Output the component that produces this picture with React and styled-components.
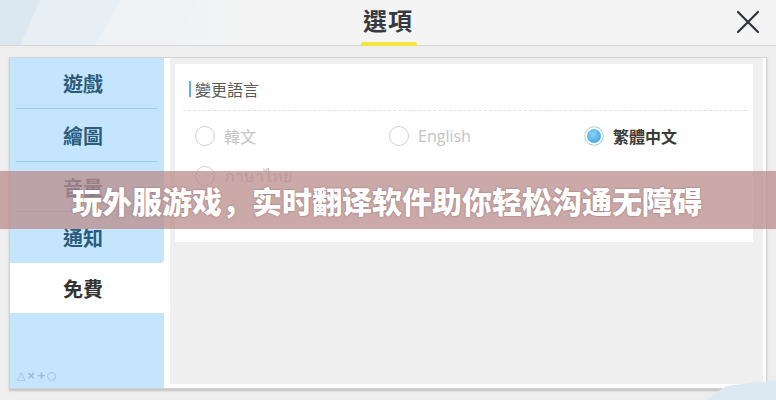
import React from 'react';
import styled, { createGlobalStyle } from 'styled-components';

const GlobalStyle = createGlobalStyle`
  html, body {
    margin: 0;
    padding: 0;
    background: #efefef;
  }
  body {
    font-family: "Noto Sans CJK TC", "Noto Sans", sans-serif;
  }
`;

const Page = styled.div`
  position: relative;
  width: 776px;
  height: 400px;
  overflow: hidden;
  background: #eeeeee;
`;

const Header = styled.header`
  position: relative;
  height: 45px;
  display: flex;
  justify-content: center;
  align-items: flex-start;
  background: linear-gradient(90deg, #e9eef2 0%, #f4f4f4 35%, #f4f4f4 100%);
  border-bottom: 1px solid #d6d6d6;
`;

const Decor = styled.svg`
  position: absolute;
  left: 0;
  top: 0;
`;

const Title = styled.h1`
  position: relative;
  margin: 0;
  padding-top: 4px;
  font-size: 24px;
  line-height: 32px;
  font-weight: 700;
  color: #343a40;
  letter-spacing: 1px;

  &::after {
    content: '';
    position: absolute;
    left: -2px;
    right: -4px;
    top: 42px;
    height: 4px;
    border-radius: 2px;
    background: #f3e43f;
  }
`;

const Close = styled.button`
  position: absolute;
  right: 14px;
  top: 8px;
  width: 28px;
  height: 28px;
  padding: 0;
  border: none;
  background: none;
`;

const Panel = styled.div`
  display: flex;
  margin: 11px 9px 0 9px;
  height: 330px;
  border: 1px solid #d4d4d4;
  box-shadow: 0 2px 2px rgba(0, 0, 0, 0.18);
  background: #fff;
`;

const Sidebar = styled.nav`
  width: 154px;
  display: flex;
  flex-direction: column;
`;

const NavItem = styled.div`
  position: relative;
  height: ${p => p.$h || 51}px;
  display: flex;
  align-items: center;
  justify-content: center;
  padding-right: 8px;
  font-size: 20px;
  font-weight: 700;
  color: ${p => (p.$active ? '#333' : '#2c5c7c')};
  background: ${p => (p.$active ? '#ffffff' : '#c4e5fb')};
  border-radius: ${p => (p.$round ? '0 0 4px 0' : '0')};

  &::after {
    content: '';
    display: ${p => (p.$sep ? 'block' : 'none')};
    position: absolute;
    left: 6px;
    right: 6px;
    bottom: 0;
    height: 1px;
    background: #9ecbe6;
  }
`;

const NavFill = styled.div`
  flex: 1;
  display: flex;
  align-items: flex-end;
  padding: 0 0 6px 7px;
  background: #c4e5fb;
  color: #9bb9cc;
  font-family: "DejaVu Sans", sans-serif;
  font-size: 11px;
  font-weight: 700;
  letter-spacing: 1px;
`;

const Content = styled.section`
  flex: 1;
  padding: 6px 10px 0 5px;
  margin: 0 0 4px 6px;
  background: #efefef;
  border-right: 3px solid #fff;
`;

const Card = styled.div`
  height: 178px;
  background: #ffffff;
  padding: 12px 6px 0 8px;
  box-sizing: border-box;
`;

const CardTitle = styled.div`
  display: flex;
  align-items: center;
  height: 26px;
  padding-left: 6px;
  font-size: 16px;
  color: #5a5a5a;
  border-bottom: 1px dashed #e0e0e0;
  padding-bottom: 8px;

  &::before {
    content: '';
    width: 2px;
    height: 16px;
    margin-right: 4px;
    background: #5bb3de;
  }
`;

const Options = styled.div`
  display: grid;
  grid-template-columns: 194px 195px 1fr;
  row-gap: 18px;
  padding: 14px 0 0 12px;
`;

const Option = styled.label`
  display: flex;
  align-items: center;
  gap: 9px;
  height: 22px;
  font-size: 16px;
  font-weight: ${p => (p.$checked ? 700 : 400)};
  color: ${p => (p.$checked ? '#3a3a3a' : '#c4c4c4')};
  font-family: ${p => (p.$latin ? '"Open Sans", "Noto Sans", sans-serif' : 'inherit')};
`;

const Radio = styled.span`
  width: 18px;
  height: 18px;
  border-radius: 50%;
  border: 1.5px solid ${p => (p.$checked ? '#d6dde3' : '#cfcfcf')};
  background: ${p =>
    p.$checked
      ? 'radial-gradient(circle at 45% 40%, #8fd3f7 0%, #4aaee6 55%, #3795d2 100%)'
      : '#fff'};
  box-shadow: ${p => (p.$checked ? 'inset 0 0 0 2px #fff' : 'none')};
`;

const Banner = styled.div`
  position: absolute;
  left: 0;
  right: 0;
  top: 171px;
  height: 58px;
  display: flex;
  align-items: center;
  padding-left: 72px;
  background: rgba(186, 140, 140, 0.75);
  color: #ffffff;
  font-family: "Noto Sans CJK SC", sans-serif;
  font-size: 30px;
  font-weight: 900;
  letter-spacing: 0;
  text-shadow: 0 0 2px rgba(80, 40, 40, 0.5);
`;

const BottomDecor = styled.svg`
  position: absolute;
  right: 0;
  bottom: 0;
`;

const languages = [
  { label: '韓文' },
  { label: 'English', latin: true },
  { label: '繁體中文', checked: true },
  { label: 'ภาษาไทย', latin: true },
];

export default function App() {
  return (
    <Page>
      <GlobalStyle />
      <Header>
        <Decor width="260" height="45" viewBox="0 0 260 45">
          <polygon points="0,0 60,0 20,45 0,45" fill="#dce8f1" />
          <polygon points="40,0 120,0 95,45 20,45" fill="#e7eef4" />
          <polygon points="120,0 200,0 170,45 95,45" fill="#eef2f5" />
        </Decor>
        <Title>選項</Title>
        <Close aria-label="close">
          <svg width="28" height="28" viewBox="0 0 28 28">
            <path d="M4 4 L24 24 M24 4 L4 24" stroke="#2f3338" strokeWidth="2.2" strokeLinecap="round" />
          </svg>
        </Close>
      </Header>

      <Panel>
        <Sidebar>
          <NavItem $sep>遊戲</NavItem>
          <NavItem $sep $h={53}>繪圖</NavItem>
          <NavItem $sep $h={50}>音量</NavItem>
          <NavItem $round>通知</NavItem>
          <NavItem $active $h={50}>免費</NavItem>
          <NavFill>△×+○</NavFill>
        </Sidebar>
        <Content>
          <Card>
            <CardTitle>變更語言</CardTitle>
            <Options>
              {languages.map(l => (
                <Option key={l.label} $checked={l.checked} $latin={l.latin}>
                  <Radio $checked={l.checked} />
                  {l.label}
                </Option>
              ))}
            </Options>
          </Card>
        </Content>
      </Panel>

      <BottomDecor width="90" height="20" viewBox="0 0 90 20">
        <polygon points="20,20 40,6 90,0 90,20" fill="#dde9f2" />
      </BottomDecor>

      <Banner>玩外服游戏，实时翻译软件助你轻松沟通无障碍</Banner>
    </Page>
  );
}
